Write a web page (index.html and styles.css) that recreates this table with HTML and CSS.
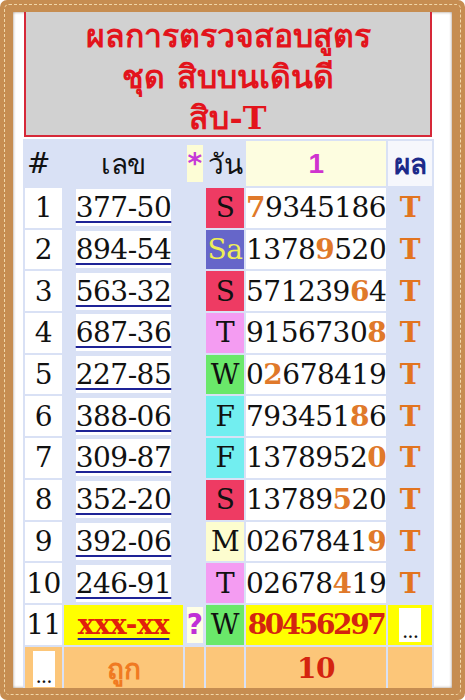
FILE: index.html
```html
<!DOCTYPE html>
<html lang="th">
<head>
<meta charset="utf-8">
<title>ผลการตรวจสอบสูตร</title>
<link rel="stylesheet" href="styles.css">
</head>
<body>
<div class="frame">
  <div class="page">
    <div class="title">
      <div>ผลการตรวจสอบสูตร</div>
      <div>ชุด สิบบนเดินดี</div>
      <div>สิบ-T</div>
    </div>
    <table class="grid">
      <colgroup>
        <col class="c1"><col class="c2"><col class="c3"><col class="c4"><col class="c5"><col class="c6">
      </colgroup>
      <thead>
        <tr class="head">
          <th class="h-num">#</th>
          <th>เลข</th>
          <th><span class="star">*</span></th>
          <th>วัน</th>
          <th class="h-one">1</th>
          <th class="h-res">ผล</th>
        </tr>
      </thead>
      <tbody>
        <tr><td class="no">1</td><td><span class="lek">377-50</span></td><td></td><td class="day d-s">S</td><td class="num"><b>7</b>9345186</td><td class="res">T</td></tr>
        <tr><td class="no">2</td><td><span class="lek">894-54</span></td><td></td><td class="day d-sa">Sa</td><td class="num">1378<b>9</b>520</td><td class="res">T</td></tr>
        <tr><td class="no">3</td><td><span class="lek">563-32</span></td><td></td><td class="day d-s">S</td><td class="num">571239<b>6</b>4</td><td class="res">T</td></tr>
        <tr><td class="no">4</td><td><span class="lek">687-36</span></td><td></td><td class="day d-t">T</td><td class="num">9156730<b>8</b></td><td class="res">T</td></tr>
        <tr><td class="no">5</td><td><span class="lek">227-85</span></td><td></td><td class="day d-w">W</td><td class="num">0<b>2</b>678419</td><td class="res">T</td></tr>
        <tr><td class="no">6</td><td><span class="lek">388-06</span></td><td></td><td class="day d-f">F</td><td class="num">793451<b>8</b>6</td><td class="res">T</td></tr>
        <tr><td class="no">7</td><td><span class="lek">309-87</span></td><td></td><td class="day d-f">F</td><td class="num">1378952<b>0</b></td><td class="res">T</td></tr>
        <tr><td class="no">8</td><td><span class="lek">352-20</span></td><td></td><td class="day d-s">S</td><td class="num">13789<b>5</b>20</td><td class="res">T</td></tr>
        <tr><td class="no">9</td><td><span class="lek">392-06</span></td><td></td><td class="day d-m">M</td><td class="num">0267841<b>9</b></td><td class="res">T</td></tr>
        <tr><td class="no">10</td><td><span class="lek">246-91</span></td><td></td><td class="day d-t">T</td><td class="num">02678<b>4</b>19</td><td class="res">T</td></tr>
        <tr class="next">
          <td class="no">11</td>
          <td class="yel"><span class="lek-x">xxx-xx</span></td>
          <td><span class="q">?</span></td>
          <td class="day d-w">W</td>
          <td class="yel big-red tight">80456297</td>
          <td class="yel"><span class="dots">...</span></td>
        </tr>
        <tr class="sum">
          <td><span class="dots dots-tall">...</span></td>
          <td class="ok">ถูก</td>
          <td></td>
          <td></td>
          <td class="big-red">10</td>
          <td></td>
        </tr>
      </tbody>
    </table>
  </div>
</div>
</body>
</html>
```

FILE: styles.css
```css
html, body {
  margin: 0;
  padding: 0;
  background: #ffffff;
}

body {
  font-family: "DejaVu Serif", serif;
}

.frame {
  width: 465px;
  height: 700px;
  box-sizing: border-box;
  border-style: solid;
  border-color: #c68d51;
  border-width: 12px 13px 12px 13px;
  border-radius: 7px;
  position: relative;
}

.frame::after {
  content: "";
  position: absolute;
  top: -8px;
  left: -9px;
  right: -9px;
  bottom: -7px;
  border: 1px dashed #f1d7a8;
  border-radius: 5px;
  pointer-events: none;
}

.page {
  height: 676px;
  overflow: hidden;
  background: #ffffff;
  padding-left: 10px;
  box-shadow: inset 0 0 3px rgba(70, 35, 0, 0.55);
}

.title {
  margin-left: 1px;
  width: 408px;
  height: 125px;
  box-sizing: border-box;
  background: #d1d1d1;
  border: 2px solid #d62838;
  border-top: 0;
  color: #e3141c;
  font-weight: bold;
  font-size: 32px;
  line-height: 41px;
  text-align: center;
  padding-top: 4px;
}

.grid {
  margin-top: 2px;
  border-collapse: separate;
  border-spacing: 2px;
  background: #d9e1f5;
  table-layout: fixed;
  width: 411px;
}

.c1 { width: 37px; }
.c2 { width: 119px; }
.c3 { width: 19px; }
.c4 { width: 38px; }
.c5 { width: 140px; }
.c6 { width: 44px; }

.grid th,
.grid td {
  padding: 0;
  text-align: center;
  font-size: 28px;
  font-weight: normal;
  letter-spacing: -0.5px;
  color: #111111;
}

.head th {
  height: 45px;
}

.grid tbody td {
  height: 39.7px;
}

.grid .h-num {
  text-align: left;
  padding-left: 2px;
}

.star {
  display: inline-block;
  width: 16px;
  height: 37px;
  line-height: 37px;
  background: #fdfdd6;
  color: #c63ad8;
  font-weight: bold;
  font-family: "DejaVu Sans", sans-serif;
}

.grid .h-one {
  background: #fdfde0;
  color: #cf32cf;
  font-weight: bold;
  font-family: "Liberation Sans", sans-serif;
}

.grid .h-res {
  background: #f6f7fc;
  color: #1c2a8a;
  font-weight: bold;
}

.grid .no {
  background: #ffffff;
}

.lek {
  display: inline-block;
  background: #ffffff;
  line-height: 37px;
  text-decoration: underline;
  text-decoration-color: #1e2396;
  text-decoration-thickness: 2px;
  text-underline-offset: 4px;
}

.day.d-s { background: #ee3b63; }
.day.d-sa { background: #6666c9; color: #eeee55; }
.day.d-t { background: #f49cf2; }
.day.d-w { background: #6ae86a; }
.day.d-f { background: #72eef0; }
.day.d-m { background: #fdfdcf; }

.grid .num {
  background: #ffffff;
}

.num b {
  color: #e0792a;
  font-weight: bold;
}

.grid .res {
  color: #e2741f;
  font-weight: bold;
}

.grid .yel {
  background: #ffff00;
}

.lek-x {
  color: #e2200c;
  font-weight: bold;
  text-decoration: underline;
  text-decoration-color: #1e2396;
  text-decoration-thickness: 2px;
  text-underline-offset: 4px;
}

.q {
  display: inline-block;
  width: 16px;
  height: 36px;
  line-height: 36px;
  background: #ffffe6;
  color: #c030d6;
  font-weight: bold;
  font-family: "DejaVu Sans", sans-serif;
}

.grid .big-red {
  color: #d42410;
  font-weight: bold;
}

.grid .tight {
  letter-spacing: -2.4px;
}

.dots {
  display: inline-flex;
  align-items: flex-end;
  justify-content: center;
  width: 22px;
  height: 34px;
  background: #ffffff;
  font-size: 20px;
  line-height: 22px;
  letter-spacing: -1px;
  color: #111111;
  vertical-align: middle;
}

.dots-tall {
  height: 36px;
}

.sum td {
  background: #fcc679;
}

.grid .ok {
  color: #f07a22;
  font-weight: bold;
}
```
